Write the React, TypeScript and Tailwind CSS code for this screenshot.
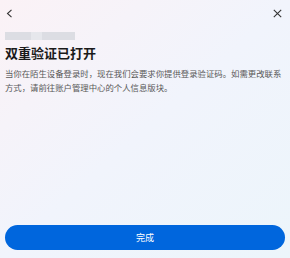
import React from "react";

const App: React.FC = () => {
  return (
    <div
      className="w-[290px] h-[258px] flex flex-col bg-gradient-to-br from-[#fbf2f6] via-[#f1f4fc] to-[#ecf5fb] px-[5px]"
      style={{ fontFamily: '"Noto Sans", "Noto Sans CJK SC", sans-serif' }}
    >
      {/* Top bar */}
      <div className="flex items-center justify-between pt-[7px] h-[20px]">
        <button className="pl-[1px] text-[#333]">
          <svg width="7" height="9" viewBox="0 0 7 9" fill="none">
            <path d="M5.5 0.8 L1.5 4.5 L5.5 8.2" stroke="#333" strokeWidth="1.1" />
          </svg>
        </button>
        <button className="pr-[3px]">
          <svg width="9" height="9" viewBox="0 0 9 9" fill="none">
            <path d="M0.8 0.8 L8.2 8.2 M8.2 0.8 L0.8 8.2" stroke="#333" strokeWidth="1.1" />
          </svg>
        </button>
      </div>

      {/* Masked account */}
      <div className="flex mt-[12px] h-[8px] w-[70px]">
        <div className="w-[26px] bg-[#dcdde3]" />
        <div className="w-[11px] bg-[#e6e7ec]" />
        <div className="flex-1 bg-[#dcdde3]" />
      </div>

      <h1 className="mt-[4px] text-[13px] leading-[18px] font-bold text-[#1a1a1a]">双重验证已打开</h1>

      <p className="mt-[5px] text-[8.4px] leading-[14px] text-[#585858]">
        当你在陌生设备登录时，现在我们会要求你提供登录验证码。如需更改联系方式，请前往账户管理中心的个人信息版块。
      </p>

      <div className="flex-1" />

      <button className="mb-[8px] h-[25px] w-full rounded-full bg-[#0066dd] text-white text-[9px]">
        完成
      </button>
    </div>
  );
};

export default App;
